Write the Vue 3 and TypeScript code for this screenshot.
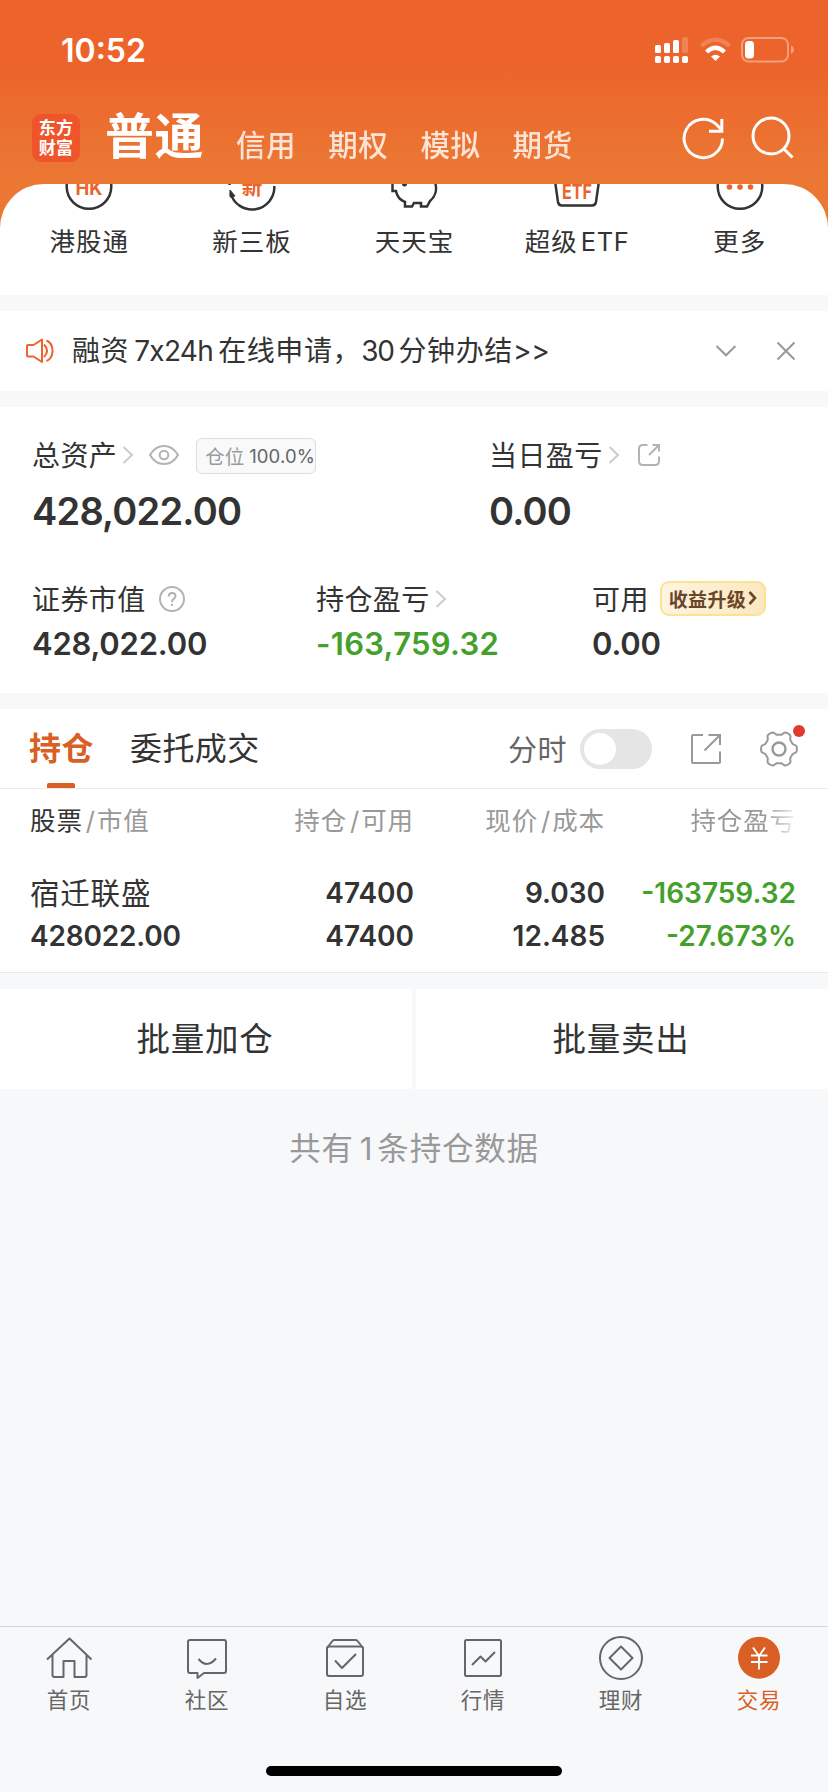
<script setup lang="ts">
interface Shortcut { id: string; label: string; latin?: string }
interface TabItem { id: string; label: string }

const modes: string[] = ['信用', '期权', '模拟', '期货']

const shortcuts: Shortcut[] = [
  { id: 'hk', label: '港股通' },
  { id: 'neeq', label: '新三板' },
  { id: 'pig', label: '天天宝' },
  { id: 'etf', label: '超级', latin: 'ETF' },
  { id: 'more', label: '更多' },
]

const tabs: TabItem[] = [
  { id: 'home', label: '首页' },
  { id: 'community', label: '社区' },
  { id: 'watch', label: '自选' },
  { id: 'market', label: '行情' },
  { id: 'wealth', label: '理财' },
  { id: 'trade', label: '交易' },
]

// Six-lobed outline of the settings gear, centred on 20,20
const gear: string = Array.from({ length: 120 }, (_, i) => {
  const a = (i / 120) * Math.PI * 2
  const r = 16.1 + 1.9 * Math.tanh(2 * Math.cos(6 * a))
  return `${i ? 'L' : 'M'}${(20 + r * Math.cos(a)).toFixed(2)} ${(20 + r * Math.sin(a)).toFixed(2)}`
}).join('') + 'Z'
</script>

<template>
  <div class="screen">
    <header class="top">
      <div class="status">
        <span class="clock">10:52</span>
        <svg class="status-icons" width="142" height="30" viewBox="0 0 142 30">
          <g fill="#fff">
            <rect x="1" y="10" width="6" height="8" rx="1.5" />
            <rect x="10" y="8" width="6" height="10" rx="1.5" />
            <rect x="19" y="5" width="6" height="13" rx="1.5" />
            <rect x="28" y="2" width="6" height="16" rx="1.5" opacity=".2" />
            <rect x="1" y="21" width="6" height="7" rx="1.8" />
            <rect x="10" y="21" width="6" height="7" rx="1.8" />
            <rect x="19" y="21" width="6" height="7" rx="1.8" />
            <rect x="28" y="21" width="6" height="7" rx="1.8" />
            <path d="M61.500 26 L57 21.500 Q61.500 18 66 21.500Z" />
          </g>
          <path d="M52.500 17 Q61.500 8.500 70.500 17" fill="none" stroke="#fff" stroke-width="4.200" />
          <path d="M47.200 11 Q61.500 -1.500 75.800 11" fill="none" stroke="#fff" stroke-width="4.200" opacity=".2" />
          <rect x="88" y="3" width="46" height="23.500" rx="6.500" fill="none" stroke="#fff" stroke-opacity=".38" stroke-width="2" />
          <rect x="91" y="6" width="9" height="17.500" rx="3.500" fill="#fff" />
          <path d="M137 10.500 Q140 12 140 14.700 T137 19Z" fill="#fff" opacity=".4" />
        </svg>
      </div>
      <div class="nav">
        <div class="logo"><span>东方</span><span>财富</span></div>
        <strong class="mode-active">普通</strong>
        <span v-for="m in modes" :key="m" class="mode">{{ m }}</span>
        <svg class="refresh" width="46" height="46" viewBox="0 0 46 46" fill="none" stroke="#fff" stroke-width="3">
          <path d="M42.500 23.500 A19.200 19.200 0 1 1 36.500 9.500 L41 14.200" />
          <path d="M41.800 4 V16.200 H29" />
        </svg>
        <svg class="search" width="46" height="46" viewBox="0 0 46 46" fill="none" stroke="#fff" stroke-width="3">
          <circle cx="21" cy="21" r="18" /><path d="M33.500 33.500 L42.500 42.500" />
        </svg>
      </div>
    </header>

    <section class="shortcuts">
      <div v-for="s in shortcuts" :key="s.id" class="shortcut">
        <svg width="52" height="52" viewBox="0 0 52 52" fill="none" stroke="#333" stroke-width="2.500">
          <template v-if="s.id === 'hk'">
            <circle cx="26" cy="26.500" r="22.300" />
            <text x="26" y="34.800" class="glyph" font-size="19" textLength="27" lengthAdjust="spacingAndGlyphs">HK</text>
          </template>
          <template v-else-if="s.id === 'neeq'">
            <path d="M4.500 33 A22.300 22.300 0 0 0 48.300 26" />
            <path d="M4 30 L9 36 L4 37Z" fill="#333" stroke-width="1" />
            <path d="M3.500 25 v-4" />
            <text x="26" y="34.500" class="glyph" font-size="20.500">新</text>
          </template>
          <template v-else-if="s.id === 'pig'">
            <path d="M4.500 20 V31 H8 C9 37 12 40 17 42 V46.500 H24 L26 43 H33 V46.500 H39 L42 41 C47 37 49.500 30 47 22 C42 8 18 6 12 15Z" />
            <circle cx="16.500" cy="24" r="2.500" fill="#333" stroke="none" />
          </template>
          <template v-else-if="s.id === 'etf'">
            <path d="M3 14 L7 42 Q7.600 45.500 11 45.500 H41 Q44.400 45.500 45 42 L49 14Z" />
            <text x="26" y="38.500" class="glyph" font-size="20" textLength="30" lengthAdjust="spacingAndGlyphs">ETF</text>
          </template>
          <template v-else>
            <circle cx="26" cy="26.500" r="22.300" />
            <g fill="#ec642b" stroke="none"><circle cx="15.500" cy="27" r="2.800" /><circle cx="26" cy="27" r="2.800" /><circle cx="36.500" cy="27" r="2.800" /></g>
          </template>
        </svg>
        <span class="shortcut-label">{{ s.label }}<span v-if="s.latin" class="latin">{{ s.latin }}</span></span>
      </div>
    </section>

    <section class="notice">
      <svg width="30" height="30" viewBox="0 0 30 30" fill="none" stroke="#ec642b" stroke-width="2">
        <path d="M2 10 Q2 9 3 9 H8.500 L17 3.500 V26 L8.500 20.500 H3 Q2 20.500 2 19.500Z" stroke-linejoin="round" />
        <path d="M19 8.500 Q25 14.700 19 21" /><path d="M21.500 4.500 C29.500 8 29.500 21.500 21.500 25" />
      </svg>
      <p class="notice-text">融资<span class="run">7x24h</span>在线申请，<span class="num">30</span>分钟办结<span class="arrows">&gt;&gt;</span></p>
      <svg class="down" width="24" height="24" viewBox="0 0 24 24" fill="none" stroke="#999" stroke-width="2"><path d="M2.500 7 L12 16.300 L21.500 7" /></svg>
      <svg width="24" height="24" viewBox="0 0 24 24" fill="none" stroke="#999" stroke-width="2"><path d="M3.500 3.500 L20.500 20.500 M20.500 3.500 L3.500 20.500" /></svg>
    </section>

    <section class="assets">
      <div class="row totals">
        <div>
          <div class="label">总资产
            <svg class="chev" width="12" height="20" viewBox="0 0 12 20"><path d="M1.500 2 L10 10 L1.500 18" /></svg>
            <svg class="eye" width="32" height="24" viewBox="0 0 32 24" fill="none" stroke="#b3b3b3" stroke-width="2"><path d="M2 12 C9 0 23 0 30 12 C23 24 9 24 2 12Z" /><circle cx="16" cy="12" r="4.300" /></svg>
            <span class="pill">仓位<em>100.0%</em></span>
          </div>
          <div class="big">428,022.00</div>
        </div>
        <div>
          <div class="label">当日盈亏
            <svg class="chev" width="12" height="20" viewBox="0 0 12 20"><path d="M1.500 2 L10 10 L1.500 18" /></svg>
            <svg class="share" width="26" height="26" viewBox="0 0 26 26" fill="none" stroke="#b3b3b3" stroke-width="2"><path d="M11.500 3 H7 Q3 3 3 7 V19 Q3 23 7 23 H19 Q23 23 23 19 V14.500 M16.500 3 H23 V9.500 M23 3 L13 13" /></svg>
          </div>
          <div class="big">0.00</div>
        </div>
      </div>
      <div class="row details">
        <div>
          <div class="label">证券市值
            <svg class="help" width="28" height="28" viewBox="0 0 28 28" fill="none" stroke="#b3b3b3" stroke-width="2"><circle cx="14" cy="14" r="12" /><path d="M10.700 11.500 C10.700 6.800 17.500 6.800 17.500 11 C17.500 13.500 14 13.800 14 17" /><path d="M14 18.800 V21" /></svg>
          </div>
          <div class="mid">428,022.00</div>
        </div>
        <div>
          <div class="label">持仓盈亏
            <svg class="chev" width="12" height="20" viewBox="0 0 12 20"><path d="M1.500 2 L10 10 L1.500 18" /></svg>
          </div>
          <div class="mid green loss">-163,759.32</div>
        </div>
        <div>
          <div class="label">可用
            <span class="badge">收益升级<svg width="9" height="14" viewBox="0 0 9 14" fill="none" stroke="#6b4527" stroke-width="2.600"><path d="M1.500 1 L7 7 L1.500 13" /></svg></span>
          </div>
          <div class="mid">0.00</div>
        </div>
      </div>
    </section>

    <section class="positions">
      <div class="bar">
        <div class="tab active">持仓</div>
        <div class="tab">委托成交</div>
        <span class="minute">分时</span>
        <span class="toggle"><i></i></span>
        <svg class="open" width="36" height="36" viewBox="0 0 36 36" fill="none" stroke="#999" stroke-width="2"><path d="M15 4 H5 Q4 4 4 5 V31 Q4 32 5 32 H31 Q32 32 32 31 V20.500 M20.500 4 H32 V14 M32 4 L16.500 19.500" /></svg>
        <div class="gear">
          <svg width="40" height="40" viewBox="0 0 40 40" fill="none" stroke="#999" stroke-width="2"><path :d="gear" /><circle cx="20" cy="20" r="6.500" stroke-width="2.400" /></svg>
          <i class="dot"></i>
        </div>
      </div>
      <div class="grid head">
        <span><b>股票</b><s>/</s>市值</span>
        <span>持仓<s>/</s>可用</span>
        <span>现价<s>/</s>成本</span>
        <span class="fade">持仓盈亏</span>
      </div>
      <div class="grid stock">
        <span class="name">宿迁联盛</span><span>47400</span><span>9.030</span><span class="green">-163759.32</span>
        <span class="value">428022.00</span><span>47400</span><span>12.485</span><span class="green">-27.673%</span>
      </div>
    </section>

    <section class="actions">
      <button>批量加仓</button>
      <button>批量卖出</button>
    </section>

    <p class="summary">共有<span class="one">1</span>条持仓数据</p>

    <nav class="tabbar">
      <div v-for="t in tabs" :key="t.id" class="item" :class="{ on: t.id === 'trade' }">
        <svg width="48" height="48" viewBox="0 0 48 48" fill="none" stroke="#666" stroke-width="2" stroke-linejoin="round">
          <path v-if="t.id === 'home'" d="M2 25.500 L24.500 4.500 L46.500 25.500 M7.500 21 V41 Q7.500 43 9.500 43 H18.500 V27 H29.500 V43 H39.500 Q41.500 43 41.500 41 V21" />
          <template v-else-if="t.id === 'community'"><path d="M6.500 6 H41 Q43 6 43 8 V37 Q43 39 41 39 H21 L14.500 44 V39 H7 Q5 39 5 37 V8 Q5 6 7 6" /><path d="M15.500 25 Q24 35 33 24.500" /></template>
          <template v-else-if="t.id === 'watch'"><rect x="6" y="12.500" width="36" height="29.500" rx="2" /><path d="M6 14 L11 7.500 Q12 6 13.500 6 H34.500 Q36 6 37 7.500 L42 14" /><path d="M14 26.500 L21 34 L35 20" /></template>
          <template v-else-if="t.id === 'market'"><rect x="6" y="6" width="36" height="36" rx="1.500" /><path d="M13 31 L21.500 22.500 L26.500 27.500 L36 18" /></template>
          <template v-else-if="t.id === 'wealth'"><circle cx="24" cy="24" r="21" /><path d="M24 12.500 L35.500 24 L24 35.500 L12.500 24Z" /></template>
          <template v-else><circle cx="24" cy="23.700" r="21" fill="#d95f25" stroke="none" /><path d="M18 13.500 L24 22 L30 13.500 M24 22 V35.500 M16 21.500 H32.500 M16 28 H32.500" stroke="#fff" stroke-width="1.900" /></template>
        </svg>
        <span>{{ t.label }}</span>
      </div>
    </nav>
    <div class="home-indicator"></div>
  </div>
</template>

<style>
body { background: #f7f8fa; }
</style>

<style scoped>
* { box-sizing: border-box; }
.screen {
  width: 828px; height: 1792px; overflow: hidden; display: flex; flex-direction: column;
  background: #f7f8fa; color: #333;
  font-family: Inter, "Noto Sans CJK SC", sans-serif; white-space: nowrap;
}
svg { display: block; flex: none; }
p { margin: 0; }
.top { flex: none; height: 236px; margin-bottom: -52px; background: linear-gradient(#ec642b 0, #ec642b 72px, #eb7633 160px, #eb7934 236px); color: #fff; }
.status { height: 100px; padding: 34px 34px 0 61px; display: flex; justify-content: space-between; align-items: flex-start; }
.clock { margin-top: 1px; font-size: 32px; font-weight: 600; line-height: 32px; }
.status-icons { margin-top: 1px; margin-right: -2px; }
.nav { height: 84px; padding-left: 32px; display: flex; align-items: flex-start; }
.logo { width: 48px; height: 48px; margin-top: 14px; padding-top: 4px; border-radius: 9px; background: #f0542b; font-size: 17px; font-weight: 700; text-align: center; display: flex; flex-direction: column; letter-spacing: .3px; }
.logo span { line-height: 20px; }
.mode-active { margin: 9px 32px 0 25px; font-size: 49px; line-height: 56px; font-weight: 600; letter-spacing: .5px; width: 99px; }
.mode { margin-top: 26px; width: 92.200px; font-size: 29.500px; line-height: 38px; font-weight: 500; letter-spacing: .6px; opacity: .8; }
.refresh { margin: 15px 0 0 75px; }
.search { margin: 15px 0 0 24px; }

.shortcuts { flex: none; height: 111px; padding: 0 7px 0 8px; background: #fff; border-radius: 44px 44px 0 0; overflow: hidden; display: flex; position: relative; }
.shortcut { flex: 1; display: flex; flex-direction: column; align-items: center; margin-top: -24px; }
.shortcut-label { margin-top: 14px; font-size: 25.500px; line-height: 32px; letter-spacing: 1px; }
.latin { margin-left: 3px; letter-spacing: .6px; }
.glyph { font-family: Inter, "Noto Sans CJK SC", sans-serif; font-weight: 700; fill: #ec642b; stroke: none; text-anchor: middle; }

.notice { flex: none; height: 80px; margin-top: 16px; padding: 0 30px 0 25px; background: #fff; display: flex; align-items: center; }
.notice-text { margin-left: 17px; flex: 1; font-size: 28px; line-height: 40px; letter-spacing: .6px; }
.run { margin: 0 5px; letter-spacing: -.7px; }
.num { margin-right: 5px; letter-spacing: -1.3px; }
.arrows { letter-spacing: -.3px; }
.down { margin-right: 36px; }

.assets { flex: none; height: 286px; margin-top: 16px; padding: 27px 0 0 32px; background: #fff; }
.row { display: grid; }
.totals { grid-template-columns: 457px 1fr; height: 144px; }
.details { grid-template-columns: 284px 276px 1fr; }
.label { height: 40px; display: flex; align-items: center; font-size: 28px; letter-spacing: .4px; }
.label > svg { margin-top: 2px; }
.chev { margin-left: 5px; fill: none; stroke: #ccc; stroke-width: 2; }
.eye { margin-left: 14px; }
.pill { margin-left: 16px; margin-top: 3px; width: 120px; height: 36px; padding-left: 8px; border: 1px solid #ddd; border-radius: 6px; background: #f8f9fb; color: #999; font-size: 19.500px; letter-spacing: 0; display: flex; align-items: center; }
.pill em { font-style: normal; color: #666; margin-left: 5px; font-size: 18.500px; letter-spacing: .1px; }
.share { margin-left: 16px; }
.help { margin-left: 12px; }
.big { margin-top: 12px; font-size: 38px; line-height: 50px; font-weight: 600; letter-spacing: -.8px; }
.mid { margin-top: 6px; font-size: 31px; line-height: 40px; font-weight: 600; letter-spacing: -.2px; }
.loss { letter-spacing: .3px; }
.green { color: #43a02a; }
.badge { margin-left: 11px; width: 106px; height: 35px; padding-left: 7px; border: 2px solid #fbe38f; border-radius: 9px; background: linear-gradient(90deg, #fdf4e2, #fbe8bf); color: #6b4527; font-size: 19px; font-weight: 700; letter-spacing: .3px; display: flex; align-items: center; }
.badge svg { margin-left: 2px; }

.positions { flex: none; height: 264px; margin-top: 16px; background: #fff; border-bottom: 1px solid #e8eaea; }
.bar { height: 80px; padding-left: 29px; border-bottom: 1px solid #ebebeb; display: flex; align-items: center; }
.tab { position: relative; height: 79px; line-height: 79px; font-size: 32px; letter-spacing: .4px; }
.tab.active { width: 101px; color: #d95f25; font-weight: 700; }
.tab.active::after { content: ""; position: absolute; left: 18px; bottom: 0; width: 28px; height: 5px; border-radius: 2px 2px 0 0; background: #d95f25; }
.minute { margin-left: auto; margin-bottom: 2px; font-size: 29px; color: #666; letter-spacing: .5px; }
.toggle { margin-left: 13px; width: 72px; height: 40px; padding: 4px; border-radius: 20px; background: #e5e5e5; }
.toggle i { display: block; width: 32px; height: 32px; border-radius: 50%; background: #fff; }
.open { margin-left: 36px; }
.gear { position: relative; margin: 0 29px 0 35px; }
.dot { position: absolute; right: -6px; top: -4px; width: 12px; height: 12px; border-radius: 50%; background: #e03a30; }
.grid { display: grid; grid-template-columns: 190px 194px 191px 191px; padding-left: 30px; text-align: right; }
.grid > span:nth-child(4n + 1) { text-align: left; }
.head { height: 80px; padding-top: 14px; font-size: 25.500px; line-height: 36px; letter-spacing: .9px; color: #999; }
.head b { font-weight: 400; color: #333; }
.head s { text-decoration: none; margin: 0 1px 0 3px; }
.fade { -webkit-mask-image: linear-gradient(90deg, #000 160px, transparent 196px); mask-image: linear-gradient(90deg, #000 160px, transparent 196px); }
.stock { grid-template-rows: 43px 43px; line-height: 43px; padding-top: 3px; font-size: 28px; font-weight: 600; }
.name { font-size: 29.500px; font-weight: 400; letter-spacing: .8px; }
.value { letter-spacing: -.2px; }

.actions { flex: none; height: 100px; margin-top: 16px; display: grid; grid-template-columns: 412px 412px; gap: 4px; }
.actions button { border: 0; padding: 0 2px 5px 0; background: #fff; color: #333; font: inherit; font-size: 33.500px; letter-spacing: .8px; }
.summary { flex: none; margin-top: 38px; line-height: 44px; text-align: center; font-size: 31.500px; letter-spacing: .8px; color: #999; }
.one { margin: 0 4px 0 6px; }

.tabbar { flex: none; margin-top: auto; height: 140px; border-top: 1px solid #d5d6d9; display: flex; }
.item { flex: 1; padding-top: 7px; display: flex; flex-direction: column; align-items: center; font-size: 21.500px; line-height: 30px; letter-spacing: .7px; color: #666; }
.item span { margin-top: 3px; }
.item.on { color: #d95f25; }
.home-indicator { flex: none; width: 296px; height: 10px; margin: 0 auto 16px; border-radius: 5px; background: #000; }
</style>
